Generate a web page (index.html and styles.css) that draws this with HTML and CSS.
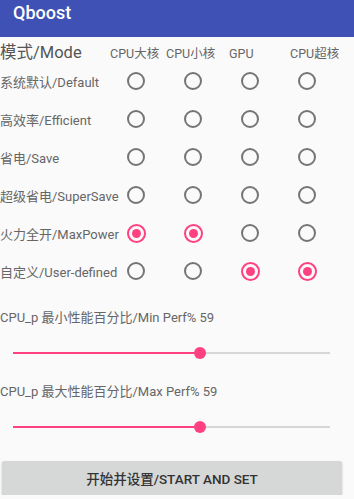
FILE: index.html
```html
<!DOCTYPE html>
<html lang="en">
<head>
    <meta charset="UTF-8">
    <meta name="viewport" content="width=device-width, initial-scale=1.0">
    <title>Qboost</title>
    <link rel="stylesheet" href="styles.css">
</head>
<body>
    <div class="app-bar">Qboost</div>

    <div class="mode-table">
        <div class="mode-head">
            <span class="mode-title">模式/Mode</span>
            <span class="col-title col-big">CPU大核</span>
            <span class="col-title col-little">CPU小核</span>
            <span class="col-title col-gpu">GPU</span>
            <span class="col-title col-prime">CPU超核</span>
        </div>

        <div class="mode-row">
            <span class="mode-label">系统默认/Default</span>
            <span class="radio"></span>
            <span class="radio"></span>
            <span class="radio"></span>
            <span class="radio"></span>
        </div>
        <div class="mode-row">
            <span class="mode-label">高效率/Efficient</span>
            <span class="radio"></span>
            <span class="radio"></span>
            <span class="radio"></span>
            <span class="radio"></span>
        </div>
        <div class="mode-row">
            <span class="mode-label">省电/Save</span>
            <span class="radio"></span>
            <span class="radio"></span>
            <span class="radio"></span>
            <span class="radio"></span>
        </div>
        <div class="mode-row">
            <span class="mode-label">超级省电/SuperSave</span>
            <span class="radio"></span>
            <span class="radio"></span>
            <span class="radio"></span>
            <span class="radio"></span>
        </div>
        <div class="mode-row">
            <span class="mode-label">火力全开/MaxPower</span>
            <span class="radio checked"></span>
            <span class="radio checked"></span>
            <span class="radio"></span>
            <span class="radio"></span>
        </div>
        <div class="mode-row">
            <span class="mode-label">自定义/User-defined</span>
            <span class="radio"></span>
            <span class="radio"></span>
            <span class="radio checked"></span>
            <span class="radio checked"></span>
        </div>
    </div>

    <div class="perf">
        <p class="perf-label">CPU_p 最小性能百分比/Min Perf% 59</p>
        <div class="slider">
            <div class="slider-track">
                <div class="slider-fill" style="width: 59%"></div>
                <span class="slider-thumb" style="left: 59%"></span>
            </div>
        </div>

        <p class="perf-label second">CPU_p 最大性能百分比/Max Perf% 59</p>
        <div class="slider">
            <div class="slider-track">
                <div class="slider-fill" style="width: 59%"></div>
                <span class="slider-thumb" style="left: 59%"></span>
            </div>
        </div>
    </div>

    <button type="button" class="start-btn">开始并设置/START AND SET</button>
</body>
</html>
```

FILE: styles.css
```css
* {
    margin: 0;
    padding: 0;
    box-sizing: border-box;
}

body {
    font-family: Roboto, "Noto Sans CJK SC", sans-serif;
    background-color: #fafafa;
    color: #666;
    width: 354px;
    overflow: hidden;
}

.app-bar {
    height: 37px;
    background-color: #3f51b5;
    color: #fff;
    font-size: 18px;
    font-weight: 500;
    line-height: 25px;
    padding-left: 13px;
}

.mode-head {
    display: flex;
    align-items: baseline;
    height: 19px;
    margin-top: 6px;
    line-height: 19px;
    white-space: nowrap;
}

.mode-title {
    font-size: 16.5px;
    color: #555;
    width: 110px;
}

.col-title {
    font-size: 12.5px;
    color: #666;
}

.col-big {
    width: 56px;
}

.col-little {
    width: 63px;
}

.col-gpu {
    width: 61px;
}

.mode-row {
    display: grid;
    grid-template-columns: 88px 18px 18px 18px 18px;
    column-gap: 39px;
    align-items: center;
    height: 38px;
}

.mode-label {
    font-size: 13px;
    white-space: nowrap;
}

.radio {
    width: 18px;
    height: 18px;
    border: 2px solid #757575;
    border-radius: 50%;
    display: flex;
    justify-content: center;
    align-items: center;
}

.radio.checked {
    width: 19px;
    height: 19px;
    margin: -0.5px;
    border-color: #ff4081;
}

.radio.checked::after {
    content: "";
    width: 9px;
    height: 9px;
    border-radius: 50%;
    background-color: #ff4081;
}

.perf {
    margin-top: 18px;
}

.perf-label {
    font-size: 13px;
    line-height: 20px;
    white-space: nowrap;
}

.perf-label.second {
    margin-top: 4px;
}

.slider {
    height: 50px;
    padding: 0 24px 0 13px;
    display: flex;
    align-items: center;
}

.slider-track {
    position: relative;
    width: 100%;
    height: 2px;
    background-color: #d6d6d6;
}

.slider-fill {
    height: 2px;
    background-color: #ff4081;
}

.slider-thumb {
    position: absolute;
    top: -5px;
    width: 12px;
    height: 12px;
    margin-left: -6px;
    border-radius: 50%;
    background-color: #ff4081;
}

.start-btn {
    display: block;
    width: 340px;
    height: 34px;
    margin: 9px 0 0 2px;
    background-color: #d6d7d7;
    border: none;
    border-radius: 2px;
    box-shadow: 0 1px 2px rgba(0, 0, 0, 0.25);
    font-family: Roboto, "Noto Sans CJK SC", sans-serif;
    font-size: 13.5px;
    font-weight: 500;
    color: #333;
}
```
